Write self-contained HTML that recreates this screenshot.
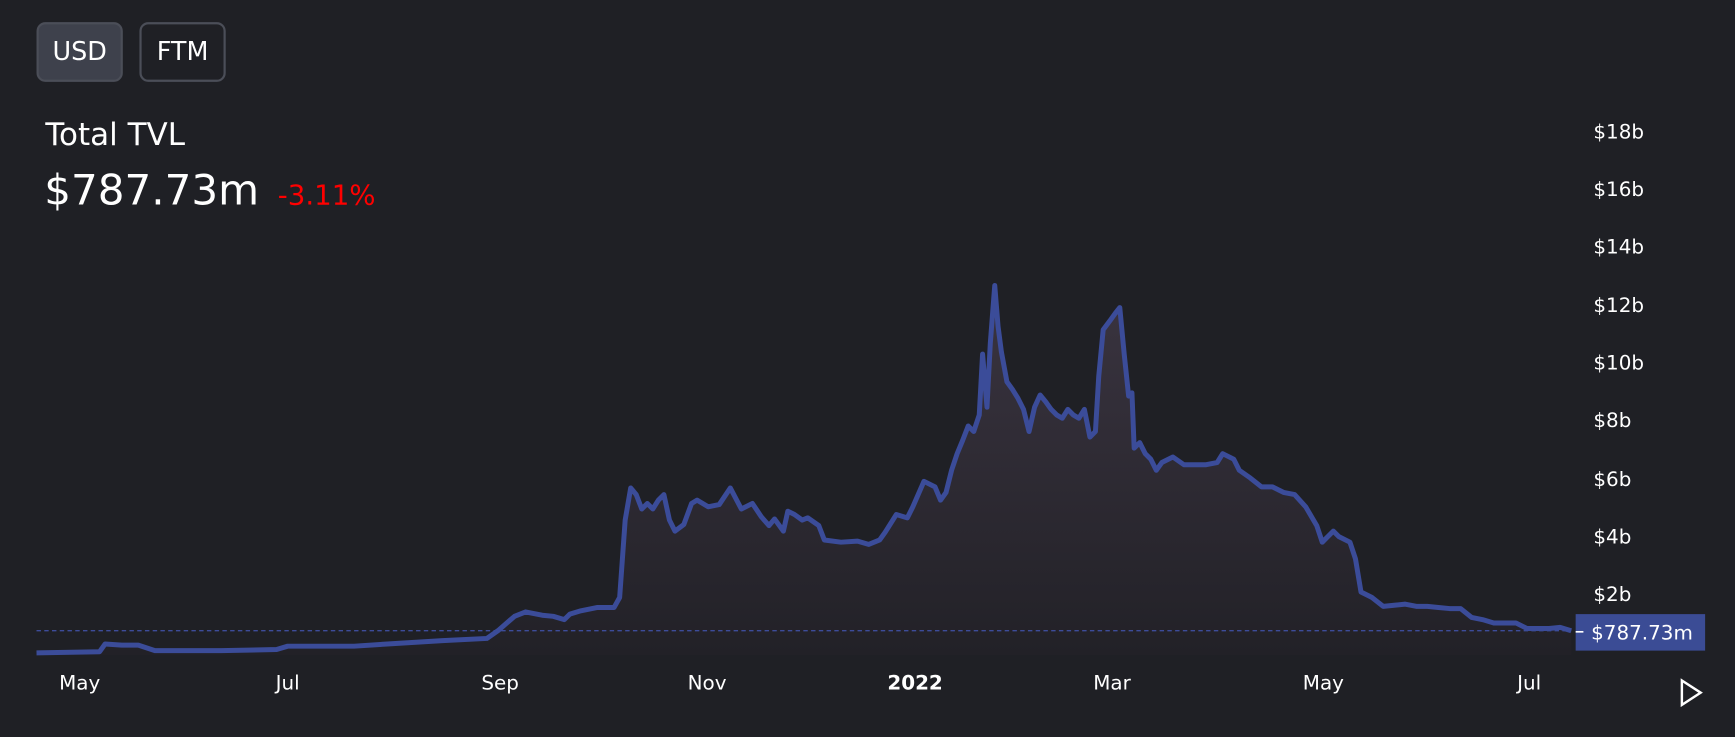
<!DOCTYPE html>
<html><head><style>
html,body{margin:0;padding:0;background:#1f2025;width:1735px;height:737px;overflow:hidden}
#w{position:absolute;left:0;top:0;width:1568px;height:666px;transform:scale(1.1065);transform-origin:0 0;font-family:"DejaVu Sans","Liberation Sans",sans-serif;color:#fff}
.btn{position:absolute;top:20px;height:54px;border-radius:8px;border:2px solid #4b4e58;box-sizing:border-box;font-size:23px;display:flex;align-items:center;justify-content:center}
.y{position:absolute;left:1440px;font-size:18px;font-family:"DejaVu Sans",sans-serif}
.x{position:absolute;top:607px;font-size:18px;transform:translateX(-50%)}
</style></head><body><div id="w">
<div class="btn" style="left:33px;width:78px;background:#3e414c">USD</div>
<div class="btn" style="left:126px;width:78px">FTM</div>
<div style="position:absolute;left:41px;top:105px;font-size:28px">Total TVL</div>
<div style="position:absolute;left:40px;top:150px;font-size:38px">$787.73m</div>
<div style="position:absolute;left:251px;top:162px;font-size:25px;color:#f00">-3.11%</div>
<div class="y" style="top:109px">$18b</div>
<div class="y" style="top:161px">$16b</div>
<div class="y" style="top:213px">$14b</div>
<div class="y" style="top:266px">$12b</div>
<div class="y" style="top:318px">$10b</div>
<div class="y" style="top:370px">$8b</div>
<div class="y" style="top:423px">$6b</div>
<div class="y" style="top:475px">$4b</div>
<div class="y" style="top:527px">$2b</div>
<svg style="position:absolute;left:0;top:0" width="1568" height="666">
<defs><linearGradient id="g" x1="0" y1="0" x2="0" y2="1"><stop offset="0" stop-color="#3a3440"/><stop offset="1" stop-color="#222127"/></linearGradient></defs>
<path id="p" d="M33,590 L90,589 95,582 110,583 125,583 140,588 200,588 250,587 260,584 320,584 350,582 400,579 440,577 450,570 465,557 475,553 490,556 500,557 510,560 515,555 525,552 540,549 555,549 560,540 565,470 570,441 575,447 580,460 585,455 590,460 595,452 600,447 605,470 610,480 618,474 625,455 630,452 640,458 650,456 660,441 670,460 680,455 688,467 695,475 700,469 708,480 712,462 718,465 725,470 730,468 740,475 745,488 760,490 775,489 785,492 795,488 800,481 810,465 820,468 825,458 835,435 845,440 850,452 855,445 860,425 865,410 870,398 875,385 880,390 885,375 888,320 892,368 895,310 899,258 902,295 905,318 910,345 915,352 920,360 925,370 930,390 935,368 940,357 945,363 950,370 955,375 960,378 965,370 970,375 975,378 980,370 985,395 990,390 993,340 997,298 1003,290 1008,283 1012,278 1016,320 1020,358 1023,355 1025,405 1030,400 1035,410 1040,415 1045,425 1050,418 1060,413 1070,420 1080,420 1090,420 1100,418 1105,410 1115,415 1120,425 1130,432 1140,440 1150,440 1160,445 1170,447 1180,458 1190,475 1195,490 1200,485 1205,480 1210,485 1220,490 1225,505 1230,535 1240,540 1250,548 1260,547 1270,546 1280,548 1290,548 1300,549 1310,550 1320,550 1330,558 1340,560 1350,563 1360,563 1370,563 1380,568 1400,568 1410,567 1420,570" fill="none"/>
<path d="M33,590 L90,589 95,582 110,583 125,583 140,588 200,588 250,587 260,584 320,584 350,582 400,579 440,577 450,570 465,557 475,553 490,556 500,557 510,560 515,555 525,552 540,549 555,549 560,540 565,470 570,441 575,447 580,460 585,455 590,460 595,452 600,447 605,470 610,480 618,474 625,455 630,452 640,458 650,456 660,441 670,460 680,455 688,467 695,475 700,469 708,480 712,462 718,465 725,470 730,468 740,475 745,488 760,490 775,489 785,492 795,488 800,481 810,465 820,468 825,458 835,435 845,440 850,452 855,445 860,425 865,410 870,398 875,385 880,390 885,375 888,320 892,368 895,310 899,258 902,295 905,318 910,345 915,352 920,360 925,370 930,390 935,368 940,357 945,363 950,370 955,375 960,378 965,370 970,375 975,378 980,370 985,395 990,390 993,340 997,298 1003,290 1008,283 1012,278 1016,320 1020,358 1023,355 1025,405 1030,400 1035,410 1040,415 1045,425 1050,418 1060,413 1070,420 1080,420 1090,420 1100,418 1105,410 1115,415 1120,425 1130,432 1140,440 1150,440 1160,445 1170,447 1180,458 1190,475 1195,490 1200,485 1205,480 1210,485 1220,490 1225,505 1230,535 1240,540 1250,548 1260,547 1270,546 1280,548 1290,548 1300,549 1310,550 1320,550 1330,558 1340,560 1350,563 1360,563 1370,563 1380,568 1400,568 1410,567 1420,570 L1420,592 33,592Z" fill="url(#g)"/>
<line x1="33" y1="570" x2="1420" y2="570" stroke="#3d4c9a" stroke-width="1.2" stroke-dasharray="4,3"/>
<use href="#p" stroke="#3b4c99" stroke-width="4.5" stroke-linejoin="round"/>
<rect x="1424" y="555" width="117" height="33" fill="#3b4c95"/>
<line x1="1424" y1="571" x2="1431" y2="571" stroke="#fff" stroke-width="1.5"/>
<text x="1438" y="578" fill="#fff" font-size="18" font-family="DejaVu Sans,sans-serif">$787.73m</text>
<path d="M1520,615 L1537,626 1520,637Z" fill="none" stroke="#fff" stroke-width="2.2"/>
</svg>
<div class="x" style="left:72px">May</div>
<div class="x" style="left:260px">Jul</div>
<div class="x" style="left:452px">Sep</div>
<div class="x" style="left:639px">Nov</div>
<div class="x" style="left:827px;font-weight:bold">2022</div>
<div class="x" style="left:1005px">Mar</div>
<div class="x" style="left:1196px">May</div>
<div class="x" style="left:1382px">Jul</div>
</div></body></html>
